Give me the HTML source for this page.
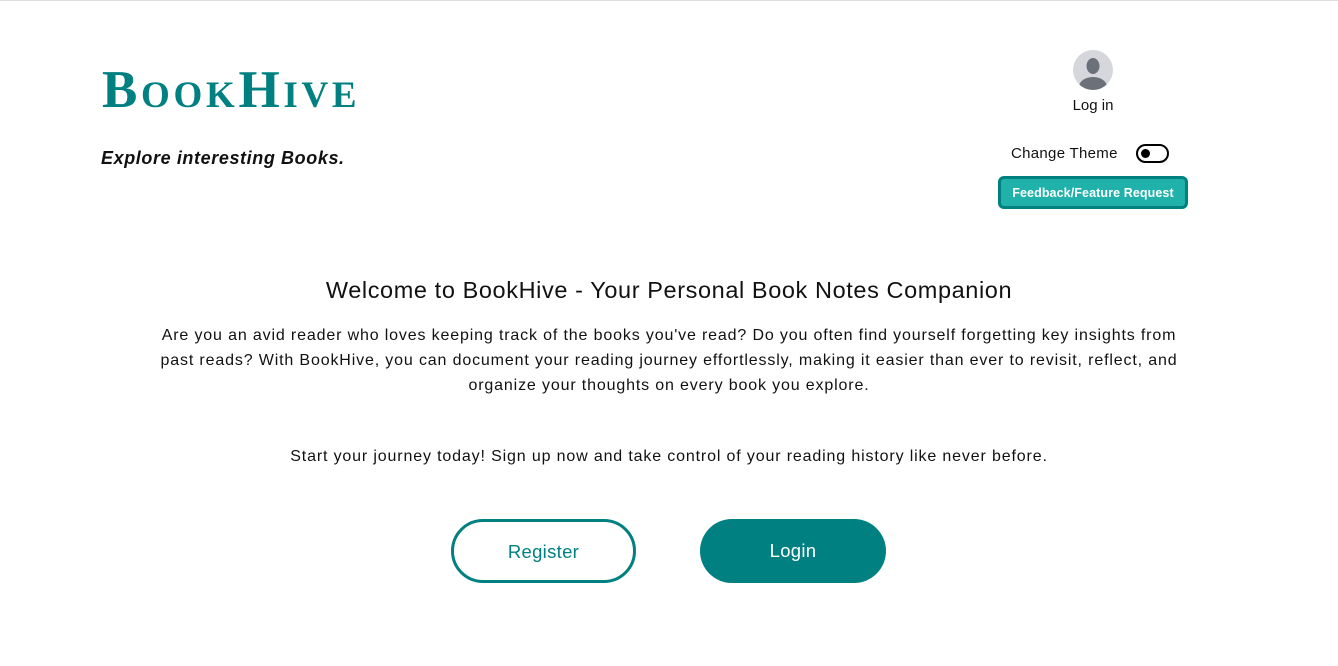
<!DOCTYPE html>
<html><head><meta charset="utf-8"><style>
html,body{margin:0;padding:0;width:1338px;height:666px;background:#fff;overflow:hidden;font-family:"Liberation Sans",sans-serif;color:#111;position:relative}
.top{position:absolute;top:0;left:0;width:1338px;height:1px;background:#ddd}
.abs{position:absolute;white-space:nowrap}
.logo{left:102px;top:57px;font-family:"Liberation Serif",serif;font-variant:small-caps;color:#008080;font-size:53px;font-weight:bold;letter-spacing:3.7px;line-height:66px}
.tag{left:101px;top:148px;font-weight:bold;font-style:italic;font-size:18px;letter-spacing:0.6px}
.av{left:1073px;top:50px}
.login-l{left:1043px;width:100px;text-align:center;top:97px;font-size:15px}
.ct{left:1011px;top:145px;font-size:15px;letter-spacing:0.3px}
.tog{left:1136px;top:144px;width:29px;height:15px;border:2.5px solid #000;border-radius:10px;box-sizing:content-box}
.tog:after{content:"";position:absolute;left:3px;top:3px;width:9px;height:9px;background:#000;border-radius:50%}
.fb{left:998px;top:176px;width:190px;height:33px;box-sizing:border-box;background:#20b2aa;border:3px solid #008080;border-radius:6px;color:#fff;font-weight:bold;font-size:12.5px;text-align:center;line-height:29px;letter-spacing:0.1px}
.h{left:0;width:1338px;text-align:center;top:277px;font-size:23.5px;letter-spacing:0.6px}
.p{left:0;width:1338px;text-align:center;top:323px;font-size:16px;line-height:25px;letter-spacing:0.85px}
.p2{left:0;width:1338px;text-align:center;top:448px;font-size:16px;letter-spacing:0.85px}
.btn{top:519px;height:64px;box-sizing:border-box;border-radius:32px;font-size:18.5px;text-align:center;line-height:60px;letter-spacing:0.3px}
.reg{left:451px;width:185px;border:3px solid #008080;color:#008080}
.lg{left:700px;width:186px;background:#008080;color:#fff;line-height:64px}
</style></head><body>
<div class="top"></div>
<div class="abs logo">BookHive</div>
<div class="abs tag">Explore interesting Books.</div>
<svg class="abs av" width="40" height="40" viewBox="0 0 40 40"><defs><clipPath id="c"><circle cx="20" cy="20" r="20"/></clipPath></defs><circle cx="20" cy="20" r="20" fill="#d5d7dc"/><g clip-path="url(#c)" fill="#6b7079"><ellipse cx="20" cy="16" rx="6.5" ry="8"/><ellipse cx="20" cy="37" rx="14" ry="10"/></g></svg>
<div class="abs login-l">Log in</div>
<div class="abs ct">Change Theme</div>
<div class="abs tog"></div>
<div class="abs fb">Feedback/Feature Request</div>
<div class="abs h">Welcome to BookHive - Your Personal Book Notes Companion</div>
<div class="abs p">Are you an avid reader who loves keeping track of the books you've read? Do you often find yourself forgetting key insights from<br>past reads? With BookHive, you can document your reading journey effortlessly, making it easier than ever to revisit, reflect, and<br>organize your thoughts on every book you explore.</div>
<div class="abs p2">Start your journey today! Sign up now and take control of your reading history like never before.</div>
<div class="abs btn reg">Register</div>
<div class="abs btn lg">Login</div>
</body></html>
